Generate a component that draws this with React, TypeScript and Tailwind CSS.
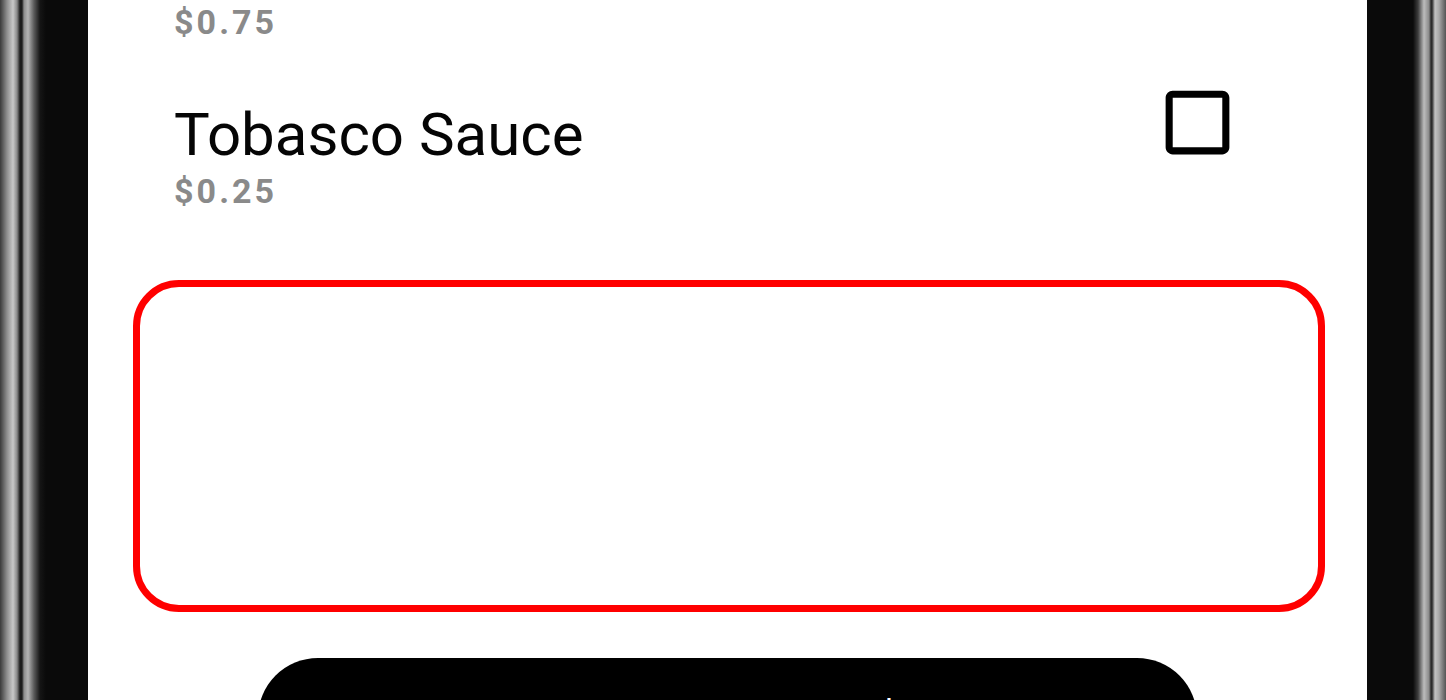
import React from "react";

function CheckboxBlank() {
  return (
    <svg width="85" height="85" viewBox="0 0 24 24" fill="#000" aria-hidden="true">
      <path d="M19 5v14H5V5h14m0-2H5c-1.1 0-2 .9-2 2v14c0 1.1.9 2 2 2h14c1.1 0 2-.9 2-2V5c0-1.1-.9-2-2-2z" />
    </svg>
  );
}

export default function App() {
  return (
    <div className="flex h-[700px] w-[1446px] overflow-hidden bg-black font-['Roboto',_'Liberation_Sans',_sans-serif]">
      {/* left bezel */}
      <div className="h-full w-[88px] shrink-0 bg-[linear-gradient(to_right,#3a3a3a_0px,#8e8e8e_7px,#c9c9c9_13px,#8a8a8a_17px,#1c1c1c_20px,#1c1c1c_22px,#8c8c8c_24px,#b4b4b4_28px,#5a5a5a_34px,#151515_40px,#0a0a0a_46px,#0a0a0a_88px)]" />

      {/* screen */}
      <div className="flex h-full min-w-0 flex-1 flex-col overflow-hidden bg-white">
        {/* previous item (scrolled, only price visible) */}
        <div className="pl-[86px] pt-[3px] pb-[30px]">
          <div className="text-[34px] font-bold leading-[38px] tracking-[0.09em] text-[#8a8a8a]">$0.75</div>
        </div>

        {/* Tobasco Sauce item */}
        <div className="flex items-start justify-between pl-[86px] pr-[127px] pb-[30px]">
          <div className="flex flex-col pt-[30px]">
            <div className="text-[60px] font-normal leading-[68px] text-[#050505]">Tobasco Sauce</div>
            <div className="mt-[3px] text-[34px] font-bold leading-[38px] tracking-[0.09em] text-[#8a8a8a]">$0.25</div>
          </div>
          <div className="pt-[9px]">
            <CheckboxBlank />
          </div>
        </div>

        {/* special instructions box */}
        <div className="ml-[45px] mr-[42px] mt-[40px] h-[332px] shrink-0 rounded-[46px] border-[7px] border-[#ff0000] bg-white" />

        {/* add button */}
        <div className="mx-[170px] mt-[46px] flex h-[120px] shrink-0 items-start justify-center gap-[151px] rounded-full bg-black pt-[37px] text-[40px] font-medium leading-[48px] text-white">
          <span>ADD TO CART</span>
          <span>$4.75</span>
        </div>
      </div>

      {/* right bezel */}
      <div className="h-full w-[79px] shrink-0 bg-[linear-gradient(to_right,#0a0a0a_0px,#0a0a0a_46px,#3c3c3c_51px,#bcbcbc_57px,#8a8a8a_62px,#2a2a2a_64px,#2a2a2a_65px,#c2c2c2_68px,#a8a8a8_72px,#555555_79px)]" />
    </div>
  );
}
